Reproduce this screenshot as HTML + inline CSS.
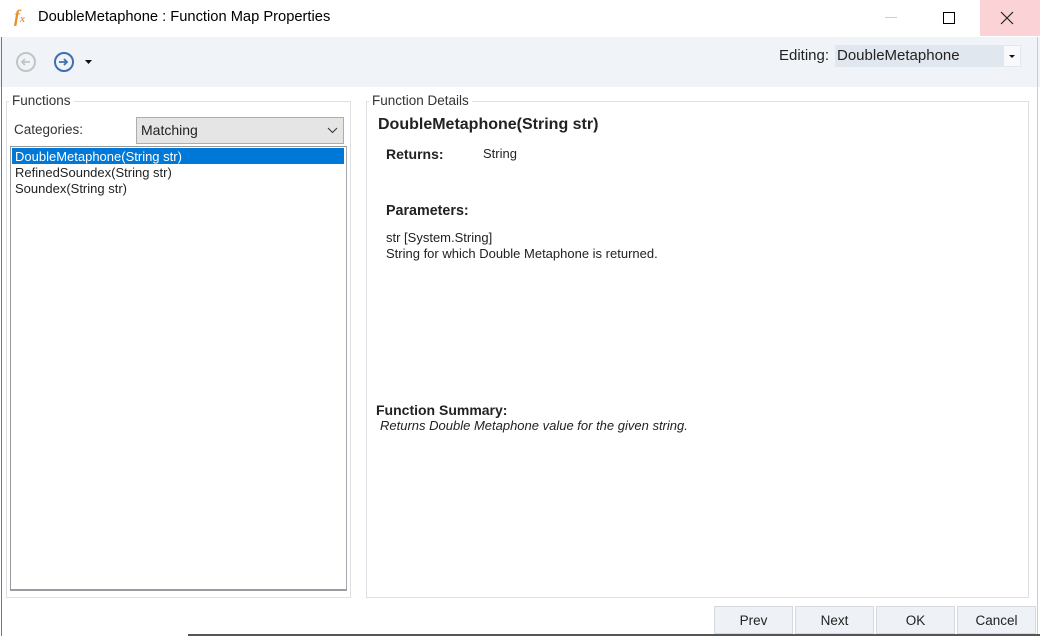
<!DOCTYPE html>
<html><head><style>
body{margin:0;width:1040px;height:636px;position:relative;background:#fff;font-family:"Liberation Sans",sans-serif;font-size:13px;color:#000;overflow:hidden}
.a{position:absolute;white-space:nowrap}
.gb{position:absolute;border:1px solid #dcdfe3}
.lg{position:absolute;background:#fff;padding:0 3px;color:#333;font-size:13.5px}
.btn{position:absolute;top:606px;height:28px;width:79px;background:#eef2f6;border:1px solid #d5dae0;box-sizing:border-box;text-align:center;line-height:27px;font-size:13.5px;color:#222}
</style></head><body>
<div class="a" style="left:0;top:0;width:1040px;height:37px;background:#fff"></div>
<div class="a" style="left:14px;top:6px;font-family:'Liberation Serif',serif;font-style:italic;font-weight:bold;color:#e8902a;font-size:18px">f<span style="font-size:10px">x</span></div>
<div class="a" style="left:38px;top:9px;font-size:14.7px">DoubleMetaphone : Function Map Properties</div>
<div class="a" style="left:885px;top:17px;width:12px;height:1px;background:#ccc"></div>
<div class="a" style="left:943px;top:12px;width:10px;height:10px;border:1px solid #000"></div>
<div class="a" style="left:980px;top:0;width:60px;height:36px;background:#fbd3d7"></div>
<svg class="a" style="left:1000px;top:11px" width="14" height="14"><path d="M1 1L13 13M13 1L1 13" stroke="#222" stroke-width="1.2"/></svg>
<div class="a" style="left:0;top:37px;width:1040px;height:50px;background:#f0f4f8"></div>
<svg class="a" style="left:15px;top:51px" width="22" height="22"><circle cx="11" cy="11" r="9" fill="none" stroke="#c4c4c4" stroke-width="2"/><path d="M15 11H7M10 8L7 11L10 14" fill="none" stroke="#c4c4c4" stroke-width="1.8"/></svg>
<svg class="a" style="left:53px;top:51px" width="22" height="22"><circle cx="11" cy="11" r="9" fill="none" stroke="#3d6fb0" stroke-width="2"/><path d="M6 11H14M11 8L14 11L11 14" fill="none" stroke="#3d6fb0" stroke-width="1.8"/></svg>
<svg class="a" style="left:85px;top:60px" width="7" height="4"><path d="M0 0H7L3.5 4z" fill="#111"/></svg>
<div class="a" style="left:779px;top:47px;font-size:15px;color:#222">Editing:</div>
<div class="a" style="left:835px;top:45px;width:186px;height:22px;background:#e1e7ef"></div>
<div class="a" style="left:1004px;top:46px;width:16px;height:20px;background:#f7f9fb"></div>
<svg class="a" style="left:1009px;top:55px" width="6" height="3"><path d="M0 0H6L3 3z" fill="#111"/></svg>
<div class="a" style="left:837px;top:47px;font-size:15px;color:#222">DoubleMetaphone</div>
<div class="a" style="left:1037px;top:37px;width:1px;height:599px;background:#ccc"></div>
<div class="a" style="left:1px;top:37px;width:1px;height:599px;background:#777"></div>
<div class="a" style="left:188px;top:634px;width:852px;height:2px;background:#555"></div>

<div class="gb" style="left:6px;top:101px;width:343px;height:495px"></div>
<div class="lg" style="left:9px;top:93px">Functions</div>
<div class="a" style="left:14px;top:122px;color:#333;font-size:13.5px">Categories:</div>
<div class="a" style="left:136px;top:117px;width:206px;height:25px;background:#e5e5e5;border:1px solid #adadad"></div>
<div class="a" style="left:141px;top:122px;font-size:14px;color:#222">Matching</div>
<svg class="a" style="left:327px;top:127px" width="11" height="7"><path d="M1 1L5.5 5.5L10 1" fill="none" stroke="#333" stroke-width="1"/></svg>
<div class="a" style="left:10px;top:146px;width:335px;height:442px;border:1px solid #999;border-right-color:#aaa;border-bottom:2px solid #9a9aa0"></div>
<div class="a" style="left:12px;top:148px;width:332px;height:16px;background:#0078d7"></div>
<div class="a" style="left:15px;top:149px;color:#fff">DoubleMetaphone(String str)</div>
<div class="a" style="left:15px;top:165px;color:#222">RefinedSoundex(String str)</div>
<div class="a" style="left:15px;top:181px;color:#222">Soundex(String str)</div>

<div class="gb" style="left:366px;top:101px;width:661px;height:495px"></div>
<div class="lg" style="left:369px;top:93px">Function Details</div>
<div class="a" style="left:378px;top:116px;font-weight:bold;font-size:16px;color:#222">DoubleMetaphone(String str)</div>
<div class="a" style="left:386px;top:146px;font-weight:bold;font-size:14px;color:#222">Returns:</div>
<div class="a" style="left:483px;top:146px;color:#222">String</div>
<div class="a" style="left:386px;top:203px;font-weight:bold;font-size:14.3px;color:#222">Parameters:</div>
<div class="a" style="left:386px;top:230px;color:#222">str [System.String]</div>
<div class="a" style="left:386px;top:246px;color:#222">String for which Double Metaphone is returned.</div>
<div class="a" style="left:376px;top:402px;font-weight:bold;font-size:14px;color:#222">Function Summary:</div>
<div class="a" style="left:380px;top:418px;font-style:italic;color:#222">Returns Double Metaphone value for the given string.</div>

<div class="btn" style="left:714px">Prev</div>
<div class="btn" style="left:795px">Next</div>
<div class="btn" style="left:876px">OK</div>
<div class="btn" style="left:957px">Cancel</div>
</body></html>
